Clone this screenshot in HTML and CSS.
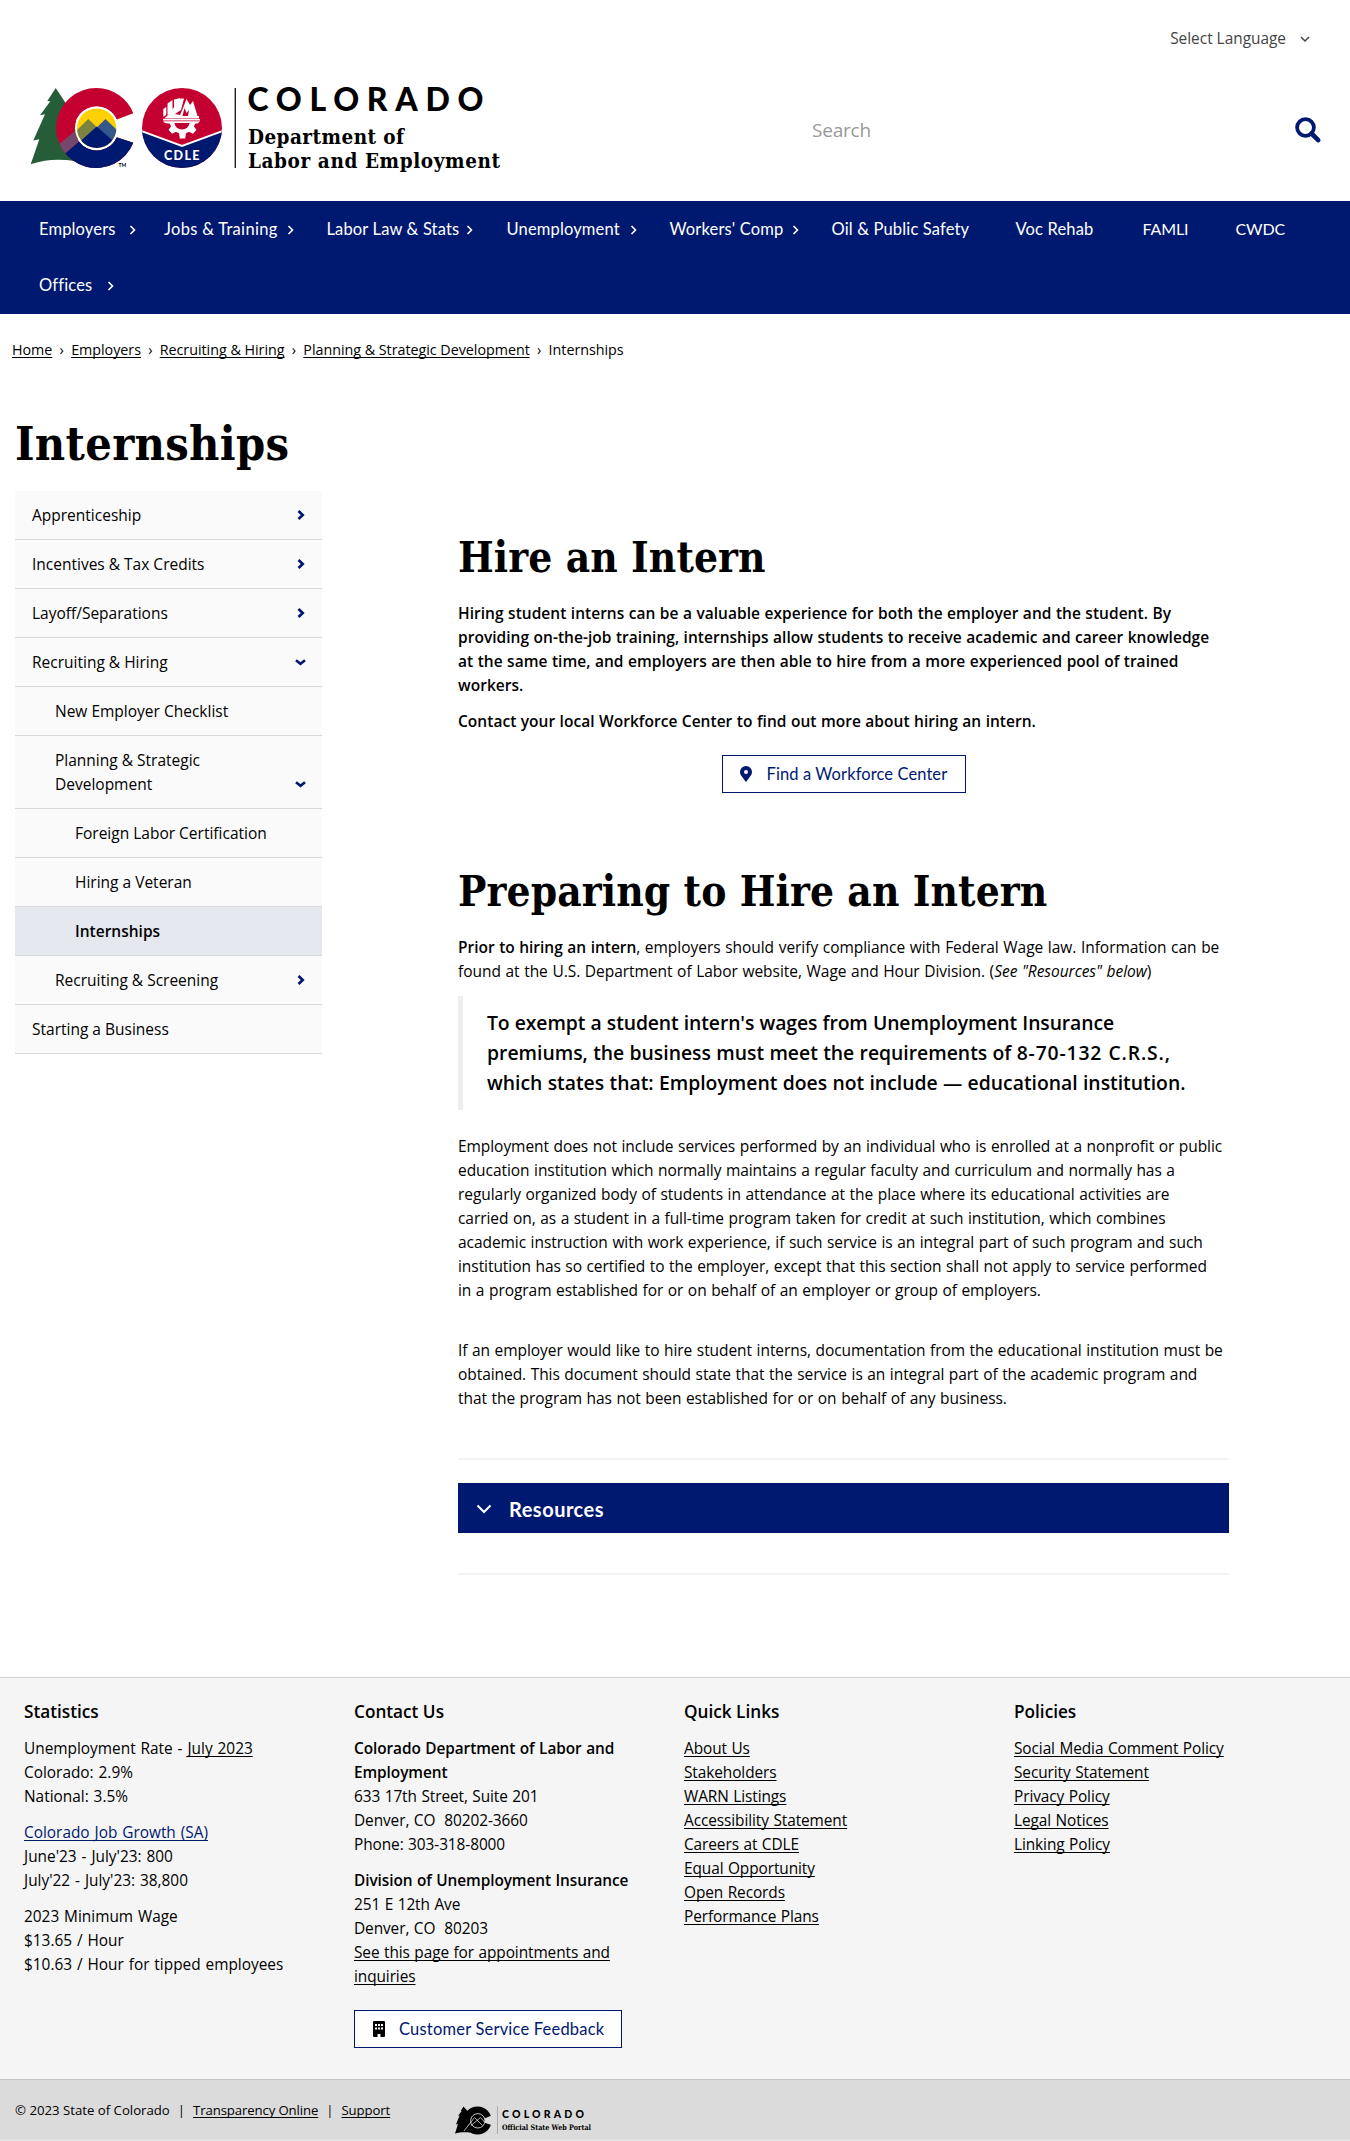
FILE: index.html
```
<!DOCTYPE html>
<html lang="en">
<head>
<meta charset="utf-8">
<title>Internships | Department of Labor &amp; Employment</title>
<link rel="stylesheet" href="styles.css">
</head>
<body>
<svg width="0" height="0" class="defs">
  <symbol id="right" viewBox="0 0 7 10"><path d="M1.5 1l4 4-4 4" fill="none" stroke="currentColor" stroke-width="1.6"/></symbol>
  <symbol id="right-bold" viewBox="0 0 8 10"><path d="M1.5 1l4.2 4-4.2 4" fill="none" stroke="currentColor" stroke-width="2.7"/></symbol>
  <symbol id="down-bold" viewBox="0 0 11 7"><path d="M1 1.2l4.5 3.6L10 1.2" fill="none" stroke="currentColor" stroke-width="2.6"/></symbol>
</svg>

<header class="header">
  <div class="lang"><span>Select Language</span>
    <svg width="10" height="7" viewBox="0 0 10 7"><path d="M1 1l4 4 4-4" fill="none" stroke="currentColor" stroke-width="1.5"/></svg>
  </div>
  <div class="brand">
    <svg class="logo" width="475" height="92" viewBox="0 0 475 92">
      <defs>
        <clipPath id="ring"><path d="M66.700 3.000A40 40 0 1 0 103.300 57.700L86.700 52.300A22 22 0 1 1 86.700 34.500L103.300 28.300A40 40 0 0 0 66.700 3z"/></clipPath>
        <clipPath id="disc"><circle cx="66.700" cy="43.300" r="19.700"/></clipPath>
        <clipPath id="seal"><circle cx="152" cy="43" r="40"/></clipPath>
      </defs>
      <path fill="#245d38" d="M25.700 3L17.300 16l3 .2L10 30.300l5-1L3.300 55.500l6-1.200L.700 79.300C16 74 30 74 45 76L50 40 35 24V17z"/>
      <g clip-path="url(#ring)">
        <rect x="20" width="90" height="90" fill="#c3002f"/>
        <path fill="#001970" d="M33.500 69L47 57.500l20-14 45 14V90H40z"/>
        <path fill="#75476a" d="M28 60l17-14 6 9-16.500 14z"/>
      </g>
      <circle cx="66.700" cy="43.300" r="21.700" fill="#fff"/>
      <g clip-path="url(#disc)">
        <rect x="45" y="20" width="44" height="44" fill="#ffd100"/>
        <path fill="#7c8340" d="M44 48l14.300-14L72 47l-18 13z"/>
        <path fill="#35588c" d="M62 47l13.500-13L88 46v14z"/>
        <path fill="#001970" d="M44 62l22.700-20.500L90 62v10H44z"/>
      </g>
      <text x="88.500" y="82" font-size="5" font-family="Lato" font-weight="700">TM</text>
      <g clip-path="url(#seal)">
        <rect x="110" width="84" height="90" fill="#c3002f"/>
        <path fill="#001970" d="M110 45l42 15.500L194 45v45h-84z"/>
        <path fill="none" stroke="#fff" stroke-width="2" d="M110 45.500l42 15.500 42-15.500"/>
      </g>
      <path fill="#fff" d="M133.300 24l3-2v8l-3 1.800zM137.500 18.500l5-3.500v12l-5 2.500zM144 14.500l6.500-1.500-3 11.500-3.500 2zM151 13.500h3l-3 11.500-6 4 5 1 3-7 3.500-9 3.500 6 3-4 4.500 15h1.500v2.500h-35l3-2.500z"/>
      <path fill="#c3002f" d="M152.500 31l2-8 2 5 2.500-3-1 6z"/>
      <path fill="none" stroke="#fff" stroke-width="1.400" d="M133 34.800h37"/>
      <path fill="#fff" d="M133 36.300h37l-2 2-3 .5-1 3 2.500 3-3.500 4-4-2-3 1.500-.8 5.200h-5.400l-.8-5.200-3-1.500-4 2-3.500-4 2.500-3-1-3-5-.8z"/>
      <path fill="#c3002f" d="M144.500 38h15a7.500 6.500 0 0 1-15 0z"/>
      <text x="134" y="75" font-size="12.500" font-family="Lato" font-weight="900" fill="#fff" textLength="35.500">CDLE</text>
      <path stroke="#222" stroke-width="1.400" d="M205.300 3v80"/>
      <g fill="#000">
        <text x="217.500" y="25.900" font-size="32" font-family="Lato" font-weight="900" textLength="236">COLORADO</text>
        <text x="218" y="59" font-size="20.500" font-family="DejaVu Serif Condensed" font-weight="700" textLength="156">Department of</text>
        <text x="218" y="82.700" font-size="20.500" font-family="DejaVu Serif Condensed" font-weight="700" textLength="252">Labor and Employment</text>
      </g>
    </svg>
    <div class="search"><span>Search</span>
      <svg width="26" height="26" viewBox="0 0 26 26"><circle cx="10.500" cy="10.500" r="8.400" fill="none" stroke="#001970" stroke-width="3.800"/><path d="M16.500 16.500l6.700 6.700" stroke="#001970" stroke-width="4.600" stroke-linecap="round"/></svg>
    </div>
  </div>
</header>

<nav class="nav">
  <a class="first">Employers<svg><use href="#right"/></svg></a>
  <a class="jobs">Jobs &amp; Training<svg><use href="#right"/></svg></a>
  <a class="labor">Labor Law &amp; Stats<svg><use href="#right"/></svg></a>
  <a>Unemployment<svg><use href="#right"/></svg></a>
  <a>Workers' Comp<svg><use href="#right"/></svg></a>
  <a>Oil &amp; Public Safety</a>
  <a>Voc Rehab</a>
  <a class="caps">FAMLI</a>
  <a class="caps">CWDC</a>
  <a class="offices">Offices<svg><use href="#right"/></svg></a>
</nav>

<div class="crumbs"><u>Home</u><i>›</i><u>Employers</u><i>›</i><u>Recruiting &amp; Hiring</u><i>›</i><u>Planning &amp; Strategic Development</u><i>›</i><span>Internships</span></div>

<h1>Internships</h1>

<div class="columns">
  <ul class="menu">
    <li>Apprenticeship<svg class="r"><use href="#right-bold"/></svg></li>
    <li>Incentives &amp; Tax Credits<svg class="r"><use href="#right-bold"/></svg></li>
    <li>Layoff/Separations<svg class="r"><use href="#right-bold"/></svg></li>
    <li>Recruiting &amp; Hiring<svg class="d"><use href="#down-bold"/></svg></li>
    <li class="l2">New Employer Checklist</li>
    <li class="l2"><span>Planning &amp; Strategic<br>Development</span><svg class="d"><use href="#down-bold"/></svg></li>
    <li class="l3">Foreign Labor Certification</li>
    <li class="l3">Hiring a Veteran</li>
    <li class="l3 active">Internships</li>
    <li class="l2">Recruiting &amp; Screening<svg class="r"><use href="#right-bold"/></svg></li>
    <li>Starting a Business</li>
  </ul>
  <main class="main">
    <h2>Hire an Intern</h2>
    <p class="strong">Hiring student interns can be a valuable experience for both the employer and the student. By<br>providing on-the-job training, internships allow students to receive academic and career knowledge<br>at the same time, and employers are then able to hire from a more experienced pool of trained<br>workers.</p>
    <p class="strong">Contact your local Workforce Center to find out more about hiring an intern.</p>
    <a class="btn find"><svg width="12" height="16" viewBox="0 0 12 16"><path fill="#001970" fill-rule="evenodd" d="M6 16C1.500 10 0 8.500 0 6a6 6 0 0 1 12 0c0 2.500-1.500 4-6 10zM6 8a2 2 0 1 0 0-4 2 2 0 0 0 0 4z"/></svg>Find a Workforce Center</a>
    <h2>Preparing to Hire an Intern</h2>
    <p class="prior"><b>Prior to hiring an intern</b>, employers should verify compliance with Federal Wage law. Information can be<br>found at the U.S. Department of Labor website, Wage and Hour Division. (<em>See "Resources" below</em>)</p>
    <blockquote><span class="q1">To exempt a student intern's wages from Unemployment Insurance</span><br>premiums, the business must meet the requirements of <span class="cite">8-70-132 C.R.S.,</span><br>which states that: Employment does not include — educational institution.</blockquote>
    <p class="law">Employment does not include services performed by an individual who is enrolled at a nonprofit or public<br>education institution which normally maintains a regular faculty and curriculum and normally has a<br>regularly organized body of students in attendance at the place where its educational activities are<br>carried on, as a student in a full-time program taken for credit at such institution, which combines<br>academic instruction with work experience, if such service is an integral part of such program and such<br>institution has so certified to the employer, except that this section shall not apply to service performed<br>in a program established for or on behalf of an employer or group of employers.</p>
    <p class="law last">If an employer would like to hire student interns, documentation from the educational institution must be<br>obtained. This document should state that the service is an integral part of the academic program and<br>that the program has not been established for or on behalf of any business.</p>
    <hr>
    <div class="accordion"><svg width="16" height="10" viewBox="0 0 16 10"><path d="M1.500 1.500L8 8l6.500-6.500" fill="none" stroke="#fff" stroke-width="2"/></svg>Resources</div>
    <hr>
  </main>
</div>

<footer>
  <div class="foot">
    <section class="stats">
      <h3>Statistics</h3>
      <p>Unemployment Rate - <u>July 2023</u><br>Colorado: 2.9%<br>National: 3.5%</p>
      <p><u class="blue">Colorado Job Growth (SA)</u><br>June'23 - July'23: 800<br>July'22 - July'23: 38,800</p>
      <p>2023 Minimum Wage<br>$13.65 / Hour<br>$10.63 / Hour for tipped employees</p>
    </section>
    <section>
      <h3>Contact Us</h3>
      <p><b>Colorado Department of Labor and<br>Employment</b><br>633 17th Street, Suite 201<br>Denver, CO&nbsp; 80202-3660<br>Phone: 303-318-8000</p>
      <p><b>Division of Unemployment Insurance</b><br>251 E 12th Ave<br>Denver, CO&nbsp; 80203<br><u>See this page for appointments and<br>inquiries</u></p>
      <a class="btn feedback"><svg width="12" height="16" viewBox="0 0 12 16"><path fill="#000" fill-rule="evenodd" d="M1 0h10a1 1 0 0 1 1 1v14a1 1 0 0 1-1 1H7.500v-3h-3v3H1a1 1 0 0 1-1-1V1a1 1 0 0 1 1-1zM2 3v2h2V3zM5 3v2h2V3zM8 3v2h2V3zM2 6.500v2h2v-2zM5 6.500v2h2v-2zM8 6.500v2h2v-2z"/></svg>Customer Service Feedback</a>
    </section>
    <section>
      <h3>Quick Links</h3>
      <p><u>About Us</u><br><u>Stakeholders</u><br><u>WARN Listings</u><br><u>Accessibility Statement</u><br><u>Careers at CDLE</u><br><u>Equal Opportunity</u><br><u>Open Records</u><br><u>Performance Plans</u></p>
    </section>
    <section>
      <h3>Policies</h3>
      <p><u>Social Media Comment Policy</u><br><u>Security Statement</u><br><u>Privacy Policy</u><br><u>Legal Notices</u><br><u>Linking Policy</u></p>
    </section>
  </div>
  <div class="bottom">
    <div class="copy"><span>© 2023 State of Colorado</span><span>|</span><u>Transparency Online</u><span>|</span><u>Support</u></div>
    <svg width="140" height="31" viewBox="0 0 140 31">
      <path d="M8.500 .5L5.700 5l1 .1L3 10l1.600-.4L1 18.500l2-.4L0 27.500c5-1.500 10-1.500 15-1L17 10z"/>
      <circle cx="22.500" cy="14.500" r="14"/>
      <path fill="#dbdbdb" d="M29 12.800l8-3.600v10l-8-2.700z"/>
      <circle cx="22.800" cy="14.800" r="7.200" stroke="#dbdbdb" stroke-width=".9"/>
      <path fill="none" stroke="#dbdbdb" stroke-width=".8" d="M9 25l10.500-13.500 8 8M16 19.500l9.500-8 4 4.500"/>
      <path stroke="#aaa" d="M42.500 0v28"/>
      <text x="47" y="11.500" font-size="10.500" font-family="Lato" font-weight="900" textLength="82">COLORADO</text>
      <text x="47" y="24" font-size="7.500" font-family="DejaVu Serif Condensed" font-weight="700" textLength="89" lengthAdjust="spacingAndGlyphs">Official State Web Portal</text>
    </svg>
  </div>
</footer>
</body>
</html>
```
FILE: styles.css
```
* { box-sizing: border-box; }
body { margin: 0; width: 1350px; background: #fff; color: #000; font: 15.5px/24px "Open Sans", sans-serif; white-space: nowrap; }
p, h1, h2, h3, ul, blockquote { margin: 0; padding: 0; }
svg { overflow: visible; }
.defs { display: block; }
u { text-underline-offset: 2px; text-decoration-thickness: 1px; text-decoration-skip-ink: none; }
b { font-weight: 600; }

.header { height: 201px; padding-top: 27px; display: flex; flex-direction: column; }
.lang { display: flex; justify-content: flex-end; align-items: center; gap: 14px; padding-right: 40px; color: #444; font-size: 15.4px; }
.brand { display: flex; justify-content: space-between; padding: 34px 29px 0 30px; }
.logo { display: block; }
.search { width: 509px; display: flex; justify-content: space-between; align-items: flex-start; padding-top: 32px; color: #999; font-size: 19px; letter-spacing: -.2px; }
.search span { line-height: 26px; }

.nav { background: #001970; color: #fff; height: 113px; padding-left: 39px; display: grid; grid-template-columns: 125px 162.5px 180px 163px 162px 184px 127px 93px 1fr; grid-auto-rows: 56px; font: 16.5px/56px Lato, sans-serif; letter-spacing: .15px; }
.nav a { display: flex; justify-content: space-between; align-items: center; padding-right: 33px; }
.nav svg { width: 7px; height: 10px; margin-top: 2px; }
.nav .first { padding-right: 28px; }
.nav .jobs { letter-spacing: .3px; }
.nav .labor { padding-right: 34px; }
.nav .offices { padding-right: 50px; }
.nav .caps { font-size: 16px; letter-spacing: -.1px; }

.crumbs { display: flex; padding: 24px 0 0 12px; font-size: 14.3px; letter-spacing: -.02px; }
.crumbs i { font-style: normal; width: 18.8px; text-align: center; }

h1 { font: 700 46.5px/56px "DejaVu Serif Condensed", "DejaVu Serif", serif; letter-spacing: .3px; padding: 54px 0 0 15px; }

.columns { display: flex; gap: 136px; padding: 19px 0 0 15px; }
.menu { width: 307px; list-style: none; align-self: flex-start; background: #fafafa; }
.menu li { display: flex; justify-content: space-between; align-items: flex-end; padding: 12px 16px 12px 17px; border-bottom: 1px solid #d8d8d8; }
.menu .l2 { padding-left: 40px; }
.menu .l3 { padding-left: 60px; }
.menu .active { background: #e5e8ef; font-weight: 600; }
.menu svg { color: #001970; }
.menu .r { width: 8px; height: 10px; margin: 0 1px 7px; }
.menu .d { width: 11px; height: 7px; margin-bottom: 8px; }

.main { width: 771px; padding-top: 42px; }
h2 { font: 700 42px/50px "DejaVu Serif Condensed", "DejaVu Serif", serif; letter-spacing: .1px; margin-bottom: 18px; }
.strong { font-weight: 600; letter-spacing: .03px; word-spacing: .4px; margin-bottom: 12px; }
.prior, .law { word-spacing: .6px; letter-spacing: -.06px; }
.prior { letter-spacing: -.03px; }
.btn { display: flex; align-items: center; border: 1px solid #001970; background: #fff; color: #001970; height: 38px; font: 16.5px/36px Lato, sans-serif; }
.find { width: 244px; margin: 22px auto 74px; padding-left: 17px; gap: 15px; letter-spacing: .1px; }
blockquote { margin: 13px 0 24px; border-left: 5px solid #eee; padding: 12px 0 12px 24px; font-size: 19.35px; line-height: 30px; font-weight: 600; word-spacing: .3px; }
.q1 { letter-spacing: -.1px; }
.cite { letter-spacing: .85px; }
.law { margin-bottom: 36px; }
hr { border: 0; height: 2px; margin: 0; background: #f4f4f4; }
.last { margin-bottom: 48px; }
.accordion { display: flex; align-items: center; gap: 17px; height: 50px; margin: 23px 0 40px; padding-left: 18px; padding-top: 1px; background: #001970; color: #fff; font: 700 20px/50px Lato, sans-serif; letter-spacing: .5px; }

footer { margin-top: 102px; }
.foot { display: grid; grid-template-columns: 330px 330px 330px 1fr; padding: 22px 0 30px 24px; height: 402px; background: #f5f5f5; border-top: 1px solid #d0d0d0; font-size: 15.4px; }
h3 { font-size: 17.2px; line-height: 24px; font-weight: 600; margin-bottom: 13px; }
.foot p { margin-bottom: 12px; letter-spacing: -.08px; word-spacing: .6px; }
.foot .stats p { letter-spacing: 0; word-spacing: .9px; }
.foot .blue { color: #001970; }
.feedback { width: 268px; margin-top: 21px; padding-left: 18px; gap: 14px; letter-spacing: .2px; }
.bottom { display: flex; height: 62px; padding: 18px 0 0 15px; background: #dbdbdb; border-top: 1px solid #c4c4c4; border-bottom: 2px solid #e3e3e3; }
.copy { width: 439.5px; display: flex; gap: 8px; font-size: 13.2px; }
.copy u { letter-spacing: -.12px; }
.bottom svg { margin-top: 8px; }
```
